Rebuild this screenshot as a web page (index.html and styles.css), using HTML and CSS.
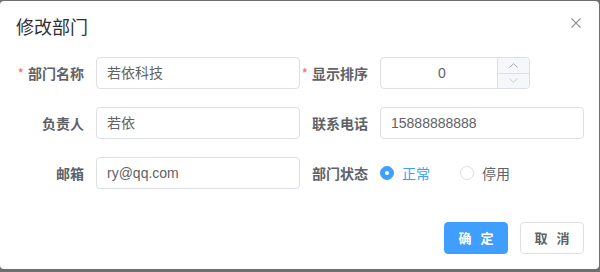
FILE: index.html
```html
<!DOCTYPE html>
<html lang="zh">
<head>
<meta charset="utf-8">
<title>修改部门</title>
<link rel="stylesheet" href="styles.css">
</head>
<body>
<div class="dialog">
  <div class="header">
    <span class="title">修改部门</span>
    <svg class="close" width="10" height="10" viewBox="0 0 10 10"><path d="M0.5 0.5 L9.5 9.5 M9.5 0.5 L0.5 9.5" stroke="#909399" stroke-width="1.1" fill="none"/></svg>
  </div>
  <div class="body">
    <div class="row">
      <div class="item">
        <label class="label"><span class="req">*</span>部门名称</label>
        <div class="input">若依科技</div>
      </div>
      <div class="item">
        <label class="label"><span class="req">*</span>显示排序</label>
        <div class="number">
          <div class="num-value">0</div>
          <div class="num-ctrl">
            <div class="ctrl up"><svg width="9" height="5" viewBox="0 0 9 5"><path d="M0.5 4.5 L4.5 0.7 L8.5 4.5" stroke="#a8abb2" fill="none"/></svg></div>
            <div class="ctrl down"><svg width="9" height="5" viewBox="0 0 9 5"><path d="M0.5 0.5 L4.5 4.3 L8.5 0.5" stroke="#c8cbd2" fill="none"/></svg></div>
          </div>
        </div>
      </div>
    </div>
    <div class="row">
      <div class="item">
        <label class="label">负责人</label>
        <div class="input">若依</div>
      </div>
      <div class="item">
        <label class="label">联系电话</label>
        <div class="input">15888888888</div>
      </div>
    </div>
    <div class="row">
      <div class="item">
        <label class="label">邮箱</label>
        <div class="input">ry@qq.com</div>
      </div>
      <div class="item">
        <label class="label">部门状态</label>
        <div class="radios">
          <span class="radio checked"><span class="dot"></span><span class="rtext">正常</span></span>
          <span class="radio"><span class="dot"></span><span class="rtext">停用</span></span>
        </div>
      </div>
    </div>
  </div>
  <div class="footer">
    <span class="btn primary">确 定</span>
    <span class="btn">取 消</span>
  </div>
</div>
</body>
</html>
```

FILE: styles.css
```css
* { box-sizing: border-box; }
html, body { margin: 0; padding: 0; }
body {
  width: 600px;
  height: 272px;
  background: #6f6f6f;
  font-family: "Liberation Sans", "Noto Sans CJK SC", sans-serif;
  overflow: hidden;
}
.dialog {
  margin-top: 1px;
  width: 599px;
  height: 268px;
  background: #fff;
  border-radius: 4px;
  display: flex;
  flex-direction: column;
}
.header {
  position: relative;
  padding: 15px 16px 0;
  height: 40px;
}
.title {
  font-size: 18px;
  line-height: 24px;
  color: #303133;
  display: block;
}
.close {
  position: absolute;
  left: 571px;
  top: 17px;
}
.body {
  padding: 16px 0 0 16px;
}
.row {
  display: flex;
  margin-bottom: 18px;
  height: 32px;
}
.item {
  width: 284px;
  display: flex;
}
.label {
  width: 80px;
  padding-right: 12px;
  text-align: right;
  font-size: 14px;
  line-height: 32px;
  font-weight: 700;
  color: #606266;
  font-family: "Noto Sans CJK SC", sans-serif;
}
.req {
  color: #f56c6c;
  margin-right: 4px;
  font-weight: 400;
}
.input {
  width: 204px;
  height: 32px;
  border: 1px solid #dcdfe6;
  border-radius: 4px;
  padding: 0 10px;
  font-size: 14px;
  line-height: 30px;
  color: #606266;
}
.number {
  width: 150px;
  height: 32px;
  border: 1px solid #dcdfe6;
  border-radius: 4px;
  display: flex;
}
.num-value {
  flex: 1;
  text-align: center;
  padding-left: 6px;
  font-size: 14px;
  line-height: 30px;
  color: #606266;
}
.num-ctrl {
  width: 32px;
  border-left: 1px solid #dcdfe6;
  display: flex;
  flex-direction: column;
  background: #f5f7fa;
  border-radius: 0 4px 4px 0;
}
.ctrl {
  flex: 1;
  display: flex;
  align-items: center;
  justify-content: center;
}
.ctrl.up { border-bottom: 1px solid #dcdfe6; }
.radios {
  display: flex;
  align-items: center;
  height: 32px;
}
.radio {
  display: flex;
  align-items: center;
  margin-right: 30px;
  font-size: 14px;
  color: #606266;
}
.dot {
  width: 14px;
  height: 14px;
  border-radius: 50%;
  border: 1px solid #dcdfe6;
  background: #fff;
  margin-right: 8px;
  position: relative;
}
.radio.checked .dot {
  background: #409eff;
  border-color: #409eff;
}
.radio.checked .dot::after {
  content: "";
  position: absolute;
  left: 4px;
  top: 4px;
  width: 4px;
  height: 4px;
  border-radius: 50%;
  background: #fff;
}
.radio.checked .rtext { color: #409eff; }
.rtext { font-family: "Noto Sans CJK SC", sans-serif; line-height: 20px; }
.footer {
  display: flex;
  justify-content: flex-end;
  gap: 12px;
  padding: 15px 15px 0 0;
}
.btn {
  width: 64px;
  height: 32px;
  border: 1px solid #dcdfe6;
  border-radius: 4px;
  font-size: 13px;
  font-weight: 700;
  line-height: 30px;
  text-align: center;
  color: #606266;
  word-spacing: 6px;
  font-family: "Noto Sans CJK SC", sans-serif;
}
.btn.primary {
  background: #409eff;
  border-color: #409eff;
  color: #fff;
}
```
